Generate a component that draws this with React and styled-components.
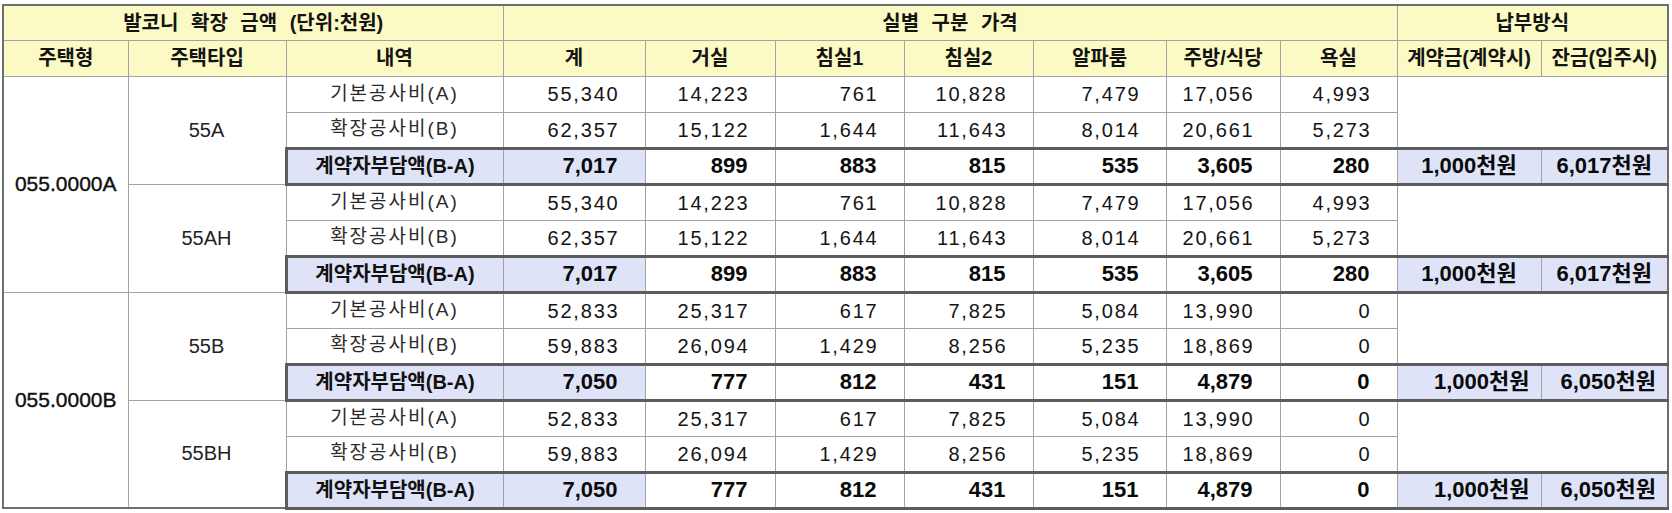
import React from "react";
import styled, { createGlobalStyle, css } from "styled-components";

const Global = createGlobalStyle`
  html, body { margin: 0; padding: 0; background: #ffffff; }
  #root { width: 1672px; }
`;

const THIN = "#a3a3a3";
const THICK = "#5c5c5c";
const YELLOW = "#fcfac4";
const PURPLE = "#dfe3f7";

const Page = styled.div`
  padding: 4px 0 0 2px;
`;

const Table = styled.table`
  border-collapse: collapse;
  table-layout: fixed;
  width: 1667px;
  border: 2px solid #6e6e6e;
  font-family: "Liberation Sans", "Noto Sans CJK KR", sans-serif;
  color: #111;
`;

const Col = styled.col`
  width: ${(p) => p.$w}px;
`;

const Row = styled.tr`
  height: ${(p) => p.$h}px;
`;

const HeadCell = styled.th`
  background: ${YELLOW};
  border: 1px solid ${THIN};
  padding: 0;
  font-family: "Liberation Sans", "Noto Sans CJK KR", sans-serif;
  font-weight: 700;
  font-size: 20px;
  line-height: 1.1;
  text-align: center;
  vertical-align: middle;
  color: #141414;
  ${(p) =>
    p.$wide &&
    css`
      word-spacing: 7px;
    `}
`;

const ModelCell = styled.td`
  border: 1px solid ${THIN};
  padding: 0;
  font-size: 21px;
  text-align: center;
  vertical-align: middle;
  color: #111;
  -webkit-text-stroke: 0.4px #111;
`;

const TypeCell = styled.td`
  border: 1px solid ${THIN};
  padding: 0;
  font-size: 20px;
  text-align: center;
  vertical-align: middle;
  color: #222;
`;

const ItemCell = styled.td`
  border: 1px solid ${THIN};
  padding: 0;
  text-align: center;
  vertical-align: middle;
  line-height: 1.1;
  white-space: nowrap;
  ${(p) =>
    p.$sum
      ? css`
          background: ${PURPLE};
          font-weight: 700;
          font-size: 20px;
          color: #111;
          border-top: 3px solid ${THICK};
          border-bottom: 3px solid ${THICK};
          border-left: 3px solid ${THICK};
        `
      : css`
          font-size: 19px;
          letter-spacing: 2px;
          color: #2a2a2a;
        `}
`;

const NumCell = styled.td`
  border: 1px solid ${THIN};
  text-align: right;
  vertical-align: middle;
  line-height: 1.1;
  white-space: nowrap;
  ${(p) =>
    p.$sum
      ? css`
          font-weight: 700;
          font-size: 22px;
          padding: 0 27px 0 0;
          color: #0a0a0a;
          background: ${p.$tint ? PURPLE : "#ffffff"};
          border-top: 3px solid ${THICK};
          border-bottom: 3px solid ${THICK};
        `
      : css`
          font-size: 20px;
          letter-spacing: 1.8px;
          padding: 0 25px 0 0;
          color: #141414;
        `}
`;

const BlankPay = styled.td`
  border: 1px solid ${THIN};
  padding: 0;
`;

const PayCell = styled.td`
  border: 1px solid ${THIN};
  border-top: 3px solid ${THICK};
  border-bottom: 3px solid ${THICK};
  background: ${PURPLE};
  font-weight: 700;
  font-size: 22px;
  line-height: 1.1;
  white-space: nowrap;
  vertical-align: middle;
  color: #0a0a0a;
  text-align: ${(p) => (p.$align === "right" ? "right" : "center")};
  padding: ${(p) => (p.$align === "right" ? "0 11px 0 0" : "0")};
`;

const COLS = [125, 158, 217, 142, 130, 129, 129, 133, 114, 117, 144, 127];

const A_TYPE = {
  base: [55340, 14223, 761, 10828, 7479, 17056, 4993],
  ext: [62357, 15122, 1644, 11643, 8014, 20661, 5273],
  diff: [7017, 899, 883, 815, 535, 3605, 280],
  pay: ["1,000천원", "6,017천원"],
};
const B_TYPE = {
  base: [52833, 25317, 617, 7825, 5084, 13990, 0],
  ext: [59883, 26094, 1429, 8256, 5235, 18869, 0],
  diff: [7050, 777, 812, 431, 151, 4879, 0],
  pay: ["1,000천원", "6,050천원"],
};

const GROUPS = [
  {
    model: "055.0000A",
    align: "center",
    types: [
      { name: "55A", ...A_TYPE },
      { name: "55AH", ...A_TYPE },
    ],
  },
  {
    model: "055.0000B",
    align: "right",
    types: [
      { name: "55B", ...B_TYPE },
      { name: "55BH", ...B_TYPE },
    ],
  },
];

const fmt = (n) => n.toLocaleString("en-US");

function TypeBlock({ group, type, first }) {
  return (
    <>
      <Row $h={36}>
        {first && <ModelCell rowSpan={6}>{group.model}</ModelCell>}
        <TypeCell rowSpan={3}>{type.name}</TypeCell>
        <ItemCell>기본공사비(A)</ItemCell>
        {type.base.map((v, i) => (
          <NumCell key={i}>{fmt(v)}</NumCell>
        ))}
        <BlankPay colSpan={2} rowSpan={2} />
      </Row>
      <Row $h={36}>
        <ItemCell>확장공사비(B)</ItemCell>
        {type.ext.map((v, i) => (
          <NumCell key={i}>{fmt(v)}</NumCell>
        ))}
      </Row>
      <Row $h={36}>
        <ItemCell $sum>계약자부담액(B-A)</ItemCell>
        {type.diff.map((v, i) => (
          <NumCell key={i} $sum $tint={i === 0}>
            {fmt(v)}
          </NumCell>
        ))}
        <PayCell $align={group.align}>{type.pay[0]}</PayCell>
        <PayCell $align={group.align}>{type.pay[1]}</PayCell>
      </Row>
    </>
  );
}

export default function App() {
  return (
    <>
      <Global />
      <Page>
        <Table>
          <colgroup>
            {COLS.map((w, i) => (
              <Col key={i} $w={w} />
            ))}
          </colgroup>
          <thead>
            <Row $h={35}>
              <HeadCell colSpan={3} $wide>
                발코니 확장 금액 (단위:천원)
              </HeadCell>
              <HeadCell colSpan={7} $wide>
                실별 구분 가격
              </HeadCell>
              <HeadCell colSpan={2}>납부방식</HeadCell>
            </Row>
            <Row $h={36}>
              <HeadCell>주택형</HeadCell>
              <HeadCell>주택타입</HeadCell>
              <HeadCell>내역</HeadCell>
              <HeadCell>계</HeadCell>
              <HeadCell>거실</HeadCell>
              <HeadCell>침실1</HeadCell>
              <HeadCell>침실2</HeadCell>
              <HeadCell>알파룸</HeadCell>
              <HeadCell>주방/식당</HeadCell>
              <HeadCell>욕실</HeadCell>
              <HeadCell>계약금(계약시)</HeadCell>
              <HeadCell>잔금(입주시)</HeadCell>
            </Row>
          </thead>
          <tbody>
            {GROUPS.map((g) =>
              g.types.map((t, ti) => (
                <TypeBlock key={t.name} group={g} type={t} first={ti === 0} />
              ))
            )}
          </tbody>
        </Table>
      </Page>
    </>
  );
}
